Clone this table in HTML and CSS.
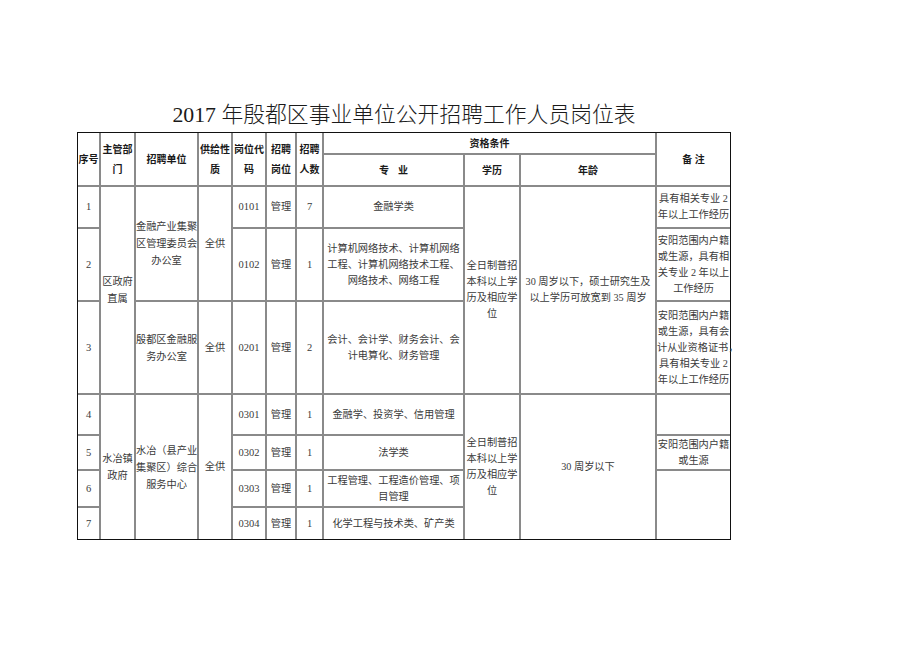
FILE: index.html
```html
<!DOCTYPE html>
<html lang="zh-CN">
<head>
<meta charset="utf-8">
<title>2017年殷都区事业单位公开招聘工作人员岗位表</title>
<link rel="stylesheet" href="styles.css">
</head>
<body>
<div class="page">
  <h1 class="title">2017 年殷都区事业单位公开招聘工作人员岗位表</h1>
  <div class="frame">
    <table class="jobs">
      <colgroup>
        <col class="c-no"><col class="c-dept"><col class="c-unit"><col class="c-supply"><col class="c-code"><col class="c-post"><col class="c-num"><col class="c-major"><col class="c-edu"><col class="c-age"><col class="c-note">
      </colgroup>
      <thead>
        <tr class="h1">
          <th rowspan="2">序号</th>
          <th rowspan="2">主管部<br>门</th>
          <th rowspan="2">招聘单位</th>
          <th rowspan="2">供给性<br>质</th>
          <th rowspan="2">岗位代<br>码</th>
          <th rowspan="2">招聘<br>岗位</th>
          <th rowspan="2">招聘<br>人数</th>
          <th colspan="3">资格条件</th>
          <th rowspan="2">备&nbsp;注</th>
        </tr>
        <tr class="h2">
          <th>专&nbsp;&nbsp;&nbsp;&nbsp;业</th>
          <th>学历</th>
          <th>年龄</th>
        </tr>
      </thead>
      <tbody>
        <tr class="r1">
          <td class="num">1</td>
          <td rowspan="3" class="tall">区政府<br>直属</td>
          <td rowspan="2" class="tall">金融产业集聚<br>区管理委员会<br>办公室</td>
          <td rowspan="2">全供</td>
          <td class="num">0101</td>
          <td>管理</td>
          <td class="num">7</td>
          <td>金融学类</td>
          <td rowspan="3">全日制普招<br>本科以上学<br>历及相应学<br>位</td>
          <td rowspan="3">30 周岁以下，硕士研究生及<br>以上学历可放宽到 35 周岁</td>
          <td>具有相关专业 2<br>年以上工作经历</td>
        </tr>
        <tr class="r2">
          <td class="num">2</td>
          <td class="num">0102</td>
          <td>管理</td>
          <td class="num">1</td>
          <td>计算机网络技术、计算机网络<br>工程、计算机网络技术工程、<br>网络技术、网络工程</td>
          <td>安阳范围内户籍<br>或生源，具有相<br>关专业 2 年以上<br>工作经历</td>
        </tr>
        <tr class="r3">
          <td class="num">3</td>
          <td class="tall">殷都区金融服<br>务办公室</td>
          <td>全供</td>
          <td class="num">0201</td>
          <td>管理</td>
          <td class="num">2</td>
          <td>会计、会计学、财务会计、会<br>计电算化、财务管理</td>
          <td>安阳范围内户籍<br>或生源，具有会<br>计从业资格证书，<br>具有相关专业 2<br>年以上工作经历</td>
        </tr>
        <tr class="r4">
          <td class="num">4</td>
          <td rowspan="4" class="tall">水冶镇<br>政府</td>
          <td rowspan="4" class="tall">水冶（县产业<br>集聚区）综合<br>服务中心</td>
          <td rowspan="4">全供</td>
          <td class="num">0301</td>
          <td>管理</td>
          <td class="num">1</td>
          <td>金融学、投资学、信用管理</td>
          <td rowspan="4">全日制普招<br>本科以上学<br>历及相应学<br>位</td>
          <td rowspan="4">30 周岁以下</td>
          <td></td>
        </tr>
        <tr class="r5">
          <td class="num">5</td>
          <td class="num">0302</td>
          <td>管理</td>
          <td class="num">1</td>
          <td>法学类</td>
          <td>安阳范围内户籍<br>或生源</td>
        </tr>
        <tr class="r6">
          <td class="num">6</td>
          <td class="num">0303</td>
          <td>管理</td>
          <td class="num">1</td>
          <td>工程管理、工程造价管理、项<br>目管理</td>
          <td rowspan="2"></td>
        </tr>
        <tr class="r7">
          <td class="num">7</td>
          <td class="num">0304</td>
          <td>管理</td>
          <td class="num">1</td>
          <td>化学工程与技术类、矿产类</td>
        </tr>
      </tbody>
    </table>
  </div>
</div>
</body>
</html>
```

FILE: styles.css
```css
html, body {
  margin: 0;
  padding: 0;
  background: #ffffff;
}

.page {
  width: 654px;
  margin-left: 77px;
  padding-top: 100px;
}

.title {
  margin: 0 0 2px 0;
  height: 30px;
  line-height: 30px;
  font-family: "Liberation Serif", "Noto Sans CJK SC", serif;
  font-size: 21.8px;
  font-weight: 300;
  color: #1a1a1a;
  text-align: center;
  white-space: nowrap;
}

.frame {
  border: 1px solid #111111;
  width: 652px;
}

.jobs {
  width: 652px;
  table-layout: fixed;
  border-collapse: collapse;
  border-style: hidden;
  font-family: "Liberation Serif", "Noto Sans CJK SC", serif;
  font-size: 10.2px;
  color: #3a3a3a;
}

.c-no { width: 22px; }
.c-dept { width: 35px; }
.c-unit { width: 63px; }
.c-supply { width: 34px; }
.c-code { width: 34px; }
.c-post { width: 30px; }
.c-num { width: 27px; }
.c-major { width: 141px; }
.c-edu { width: 56px; }
.c-age { width: 136px; }
.c-note { width: 74px; }

.jobs th,
.jobs td {
  border: 2px solid #8a8a8a;
  padding: 0;
  text-align: center;
  vertical-align: middle;
  white-space: nowrap;
  overflow: visible;
}

.jobs th {
  font-family: "Noto Sans CJK SC", sans-serif;
  font-weight: 700;
  font-size: 10px;
  line-height: 20px;
  color: #1a1a1a;
}

.jobs td {
  line-height: 16px;
}

.jobs td.tall {
  line-height: 17px;
}

.jobs td.num {
  font-family: "Liberation Serif", serif;
  font-size: 10.5px;
}

.h1 { height: 18px; }
.h2 { height: 32px; }
.r1 { height: 42px; }
.r2 { height: 73px; }
.r3 { height: 93px; }
.r4 { height: 41px; }
.r5 { height: 35px; }
.r6 { height: 37px; }
.r7 { height: 32px; }
```
